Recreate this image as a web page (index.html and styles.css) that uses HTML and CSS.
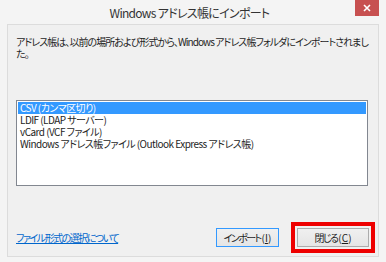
FILE: index.html
```html
<!doctype html>
<html lang="ja">
<head>
  <meta charset="utf-8"/>
  <title>Windows アドレス帳にインポート</title>
  <link rel="stylesheet" href="styles.css">
</head>
<body>
  <div class="window">
    <div class="titlebar">
      <span></span>
      <span class="title">Windows アドレス帳にインポート</span>
      <button class="close" aria-label="閉じる">
        <svg width="8" height="8" viewBox="0 0 8 8"><path d="M1 1L7 7M7 1L1 7" stroke="#fff" stroke-width="1.6"/></svg>
      </button>
    </div>

    <div class="client">
      <p class="msg">アドレス帳は、以前の場所および形式から、Windows アドレス帳フォルダにインポートされまし<br>た。</p>

      <ul class="listbox">
        <li class="sel">CSV (カンマ区切り)</li>
        <li>LDIF (LDAP サーバー)</li>
        <li>vCard (VCF ファイル)</li>
        <li>Windows アドレス帳ファイル (Outlook Express アドレス帳)</li>
      </ul>

      <div class="footer">
        <a href="#" class="link">ファイル形式の選択について</a>
        <button class="btn default"><span class="jp">インポート</span>(<u>I</u>)</button>
        <div class="mark">
          <button class="btn"><span class="jp">閉じる</span>(<u>C</u>)</button>
        </div>
      </div>
    </div>
  </div>
</body>
</html>
```

FILE: styles.css
```css
:root{--frame:#f4f4f4;--face:#f0f0f0;--text:#1e1e1e}
*{box-sizing:border-box}
body{margin:0;background:var(--frame);font-family:"Noto Sans CJK JP","Noto Sans",sans-serif;font-size:10px;color:var(--text);font-feature-settings:"palt"}
.window{width:386px;height:262px;display:flex;flex-direction:column;padding:0 7px 5px 7px;background:var(--frame)}
.titlebar{height:24px;display:grid;grid-template-columns:1fr auto 1fr;margin:0 -7px;padding-right:7px}
.title{align-self:center;font-size:12px;letter-spacing:-.7px;color:#333;line-height:14px;padding-top:1px;white-space:nowrap}
.close{justify-self:end;align-self:start;width:24px;height:16px;border:0;padding:0;background:#c75050;display:flex;align-items:center;justify-content:center}
.client{flex:1;background:var(--face);border:1px solid #dcdcdc;padding:11px 3px 3px 8px;display:flex;flex-direction:column}
.msg{margin:0;line-height:12px;height:24px;letter-spacing:-.95px;white-space:nowrap}
.listbox{list-style:none;margin:40px 7px 0 0;padding:1px;height:86px;background:#fff;border:1px solid #828790;letter-spacing:-.55px}
.listbox li{height:12px;line-height:12px;padding-left:2px;white-space:nowrap}
.listbox li.sel{background:#3399ff;color:#fff}
.footer{margin-top:auto;display:flex;align-items:center}
.link{color:#0066cc;text-decoration:underline;margin-right:auto;letter-spacing:-1.5px;line-height:12px}
.btn{height:19px;padding:0;font-family:inherit;font-size:10px;color:var(--text);background:linear-gradient(#f0f0f0,#e5e5e5);border:1px solid #acacac;font-feature-settings:"palt";line-height:12px}
.btn .jp{letter-spacing:-1.6px;margin-right:1px}
.btn.default{width:63px;border-color:#3399ff;margin-right:12px}
.mark{border:4px solid #ee0000;padding:2px}
.mark .btn{width:72px;display:block}
```
